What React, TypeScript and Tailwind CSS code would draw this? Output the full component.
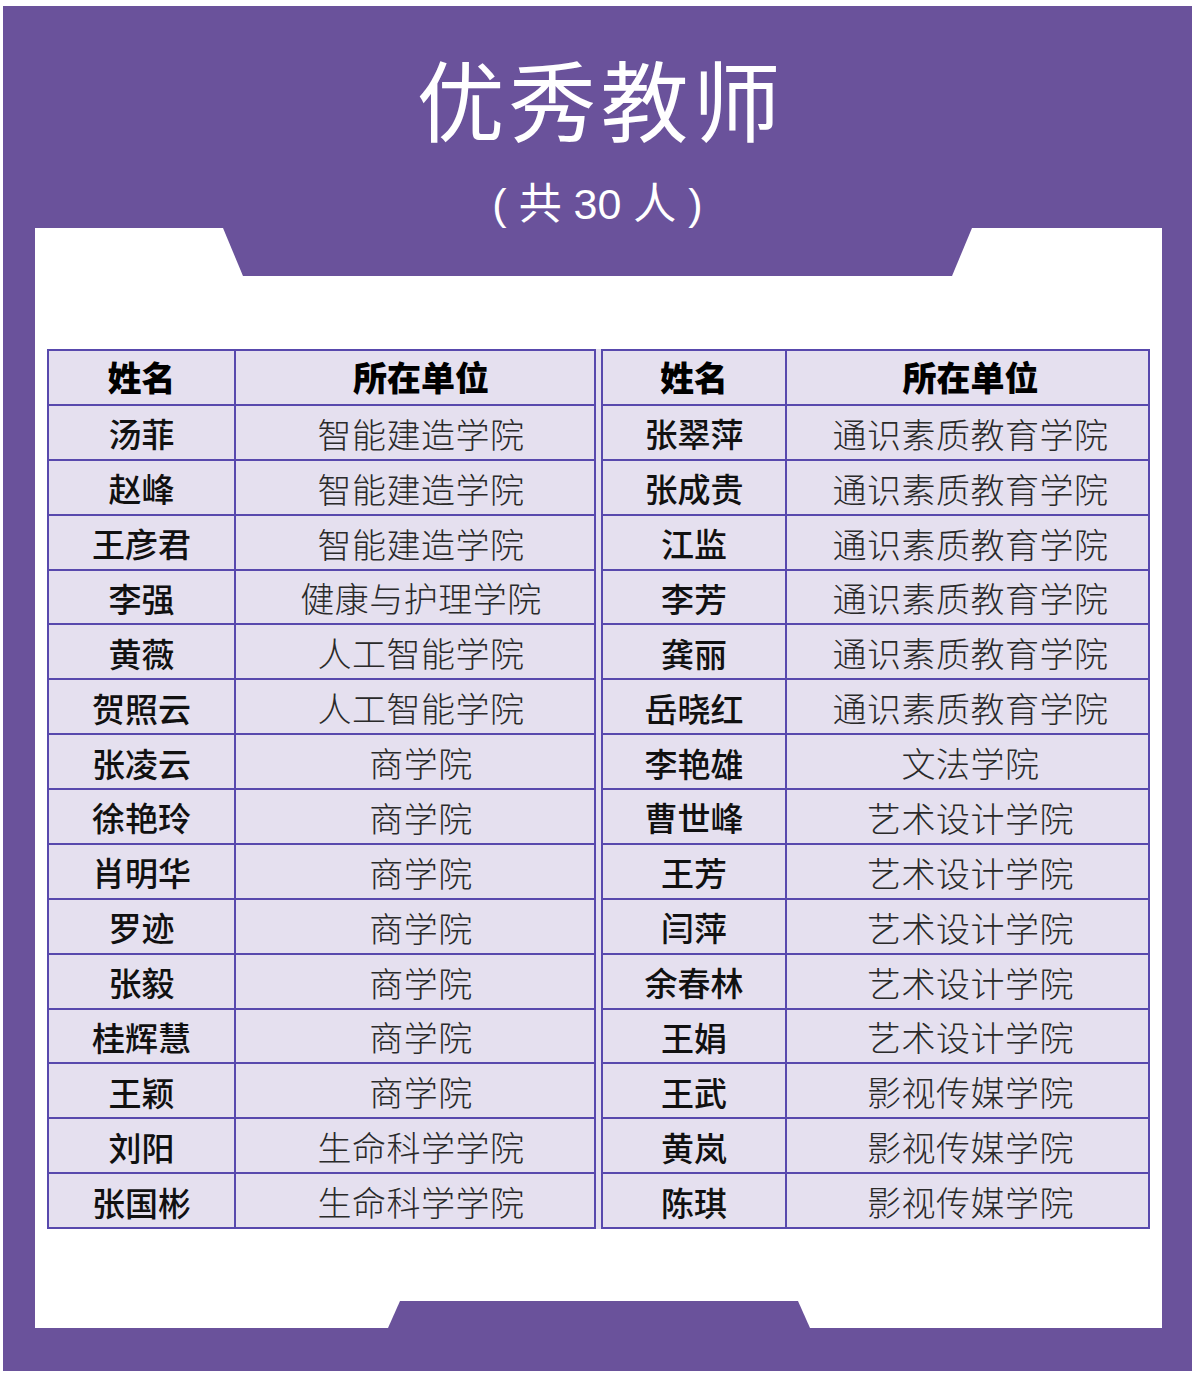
import React from "react";

const left: [string, string][] = [
  ["汤菲", "智能建造学院"],
  ["赵峰", "智能建造学院"],
  ["王彦君", "智能建造学院"],
  ["李强", "健康与护理学院"],
  ["黄薇", "人工智能学院"],
  ["贺照云", "人工智能学院"],
  ["张凌云", "商学院"],
  ["徐艳玲", "商学院"],
  ["肖明华", "商学院"],
  ["罗迹", "商学院"],
  ["张毅", "商学院"],
  ["桂辉慧", "商学院"],
  ["王颖", "商学院"],
  ["刘阳", "生命科学学院"],
  ["张国彬", "生命科学学院"],
];

const right: [string, string][] = [
  ["张翠萍", "通识素质教育学院"],
  ["张成贵", "通识素质教育学院"],
  ["江监", "通识素质教育学院"],
  ["李芳", "通识素质教育学院"],
  ["龚丽", "通识素质教育学院"],
  ["岳晓红", "通识素质教育学院"],
  ["李艳雄", "文法学院"],
  ["曹世峰", "艺术设计学院"],
  ["王芳", "艺术设计学院"],
  ["闫萍", "艺术设计学院"],
  ["余春林", "艺术设计学院"],
  ["王娟", "艺术设计学院"],
  ["王武", "影视传媒学院"],
  ["黄岚", "影视传媒学院"],
  ["陈琪", "影视传媒学院"],
];

const font = { fontFamily: '"Noto Sans CJK SC", "Noto Sans", sans-serif' };

function Half({ rows, cols, deptPad }: { rows: [string, string][]; cols: string; deptPad: string }) {
  return (
    <div className={`grid ${cols} grid-rows-16 gap-[2px] bg-[#5849ad] h-[880px] p-[2px]`}>
      <div className="bg-[#e5e0ef] flex items-center justify-center text-[34px] font-black text-black leading-none">姓名</div>
      <div className={`bg-[#e5e0ef] flex items-center justify-center ${deptPad} text-[34px] font-black text-black leading-none`}>所在单位</div>
      {rows.map(([n, d], i) => (
        <React.Fragment key={i}>
          <div className="bg-[#e5e0ef] flex items-center justify-center pt-[3px] text-[33px] font-medium text-[#111] leading-none">{n}</div>
          <div className={`bg-[#e5e0ef] flex items-center justify-center pt-[3px] ${deptPad} text-[34px] font-light text-[#2a2a2a] leading-none tracking-[0.5px]`}>{d}</div>
        </React.Fragment>
      ))}
    </div>
  );
}

export default function App() {
  return (
    <div className="w-[1192px] h-[1386px] bg-white pt-[6px] pl-[3px]" style={font}>
      <div className="w-[1189px] h-[1365px] bg-[#6a529b] flex flex-col">
        <div className="h-[222px] flex flex-col items-center text-white">
          <div className="mt-[47px] pl-[6px] text-[88px] leading-none font-normal tracking-[4px]">优秀教师</div>
          <div
            className="mt-[42px] text-[43px] leading-none font-normal"
            style={{ fontFamily: '"Liberation Sans", "Noto Sans CJK SC", sans-serif' }}
          >
            ( 共 30 人 )
          </div>
        </div>
        <div className="ml-[32px] w-[1127px] h-[1100px] bg-white relative">
          <svg className="absolute left-0 top-0" width="1127" height="48" viewBox="0 0 1127 48">
            <polygon points="188,0 937,0 917,48 208,48" fill="#6a529b" />
          </svg>
          <svg className="absolute left-0 bottom-0" width="1127" height="27" viewBox="0 0 1127 27">
            <polygon points="365,0 763,0 775,27 353,27" fill="#6a529b" />
          </svg>
          <div className="pt-[121px] pl-[12px] flex">
            <div className="w-[549px]">
              <Half rows={left} cols="grid-cols-[185px_358px]" deptPad="pl-[12px]" />
            </div>
            <div className="w-[5px] h-[880px] bg-[#e5e0ef]" />
            <div className="w-[549px]">
              <Half rows={right} cols="grid-cols-[182px_361px]" deptPad="pl-[6px]" />
            </div>
          </div>
        </div>
      </div>
    </div>
  );
}
